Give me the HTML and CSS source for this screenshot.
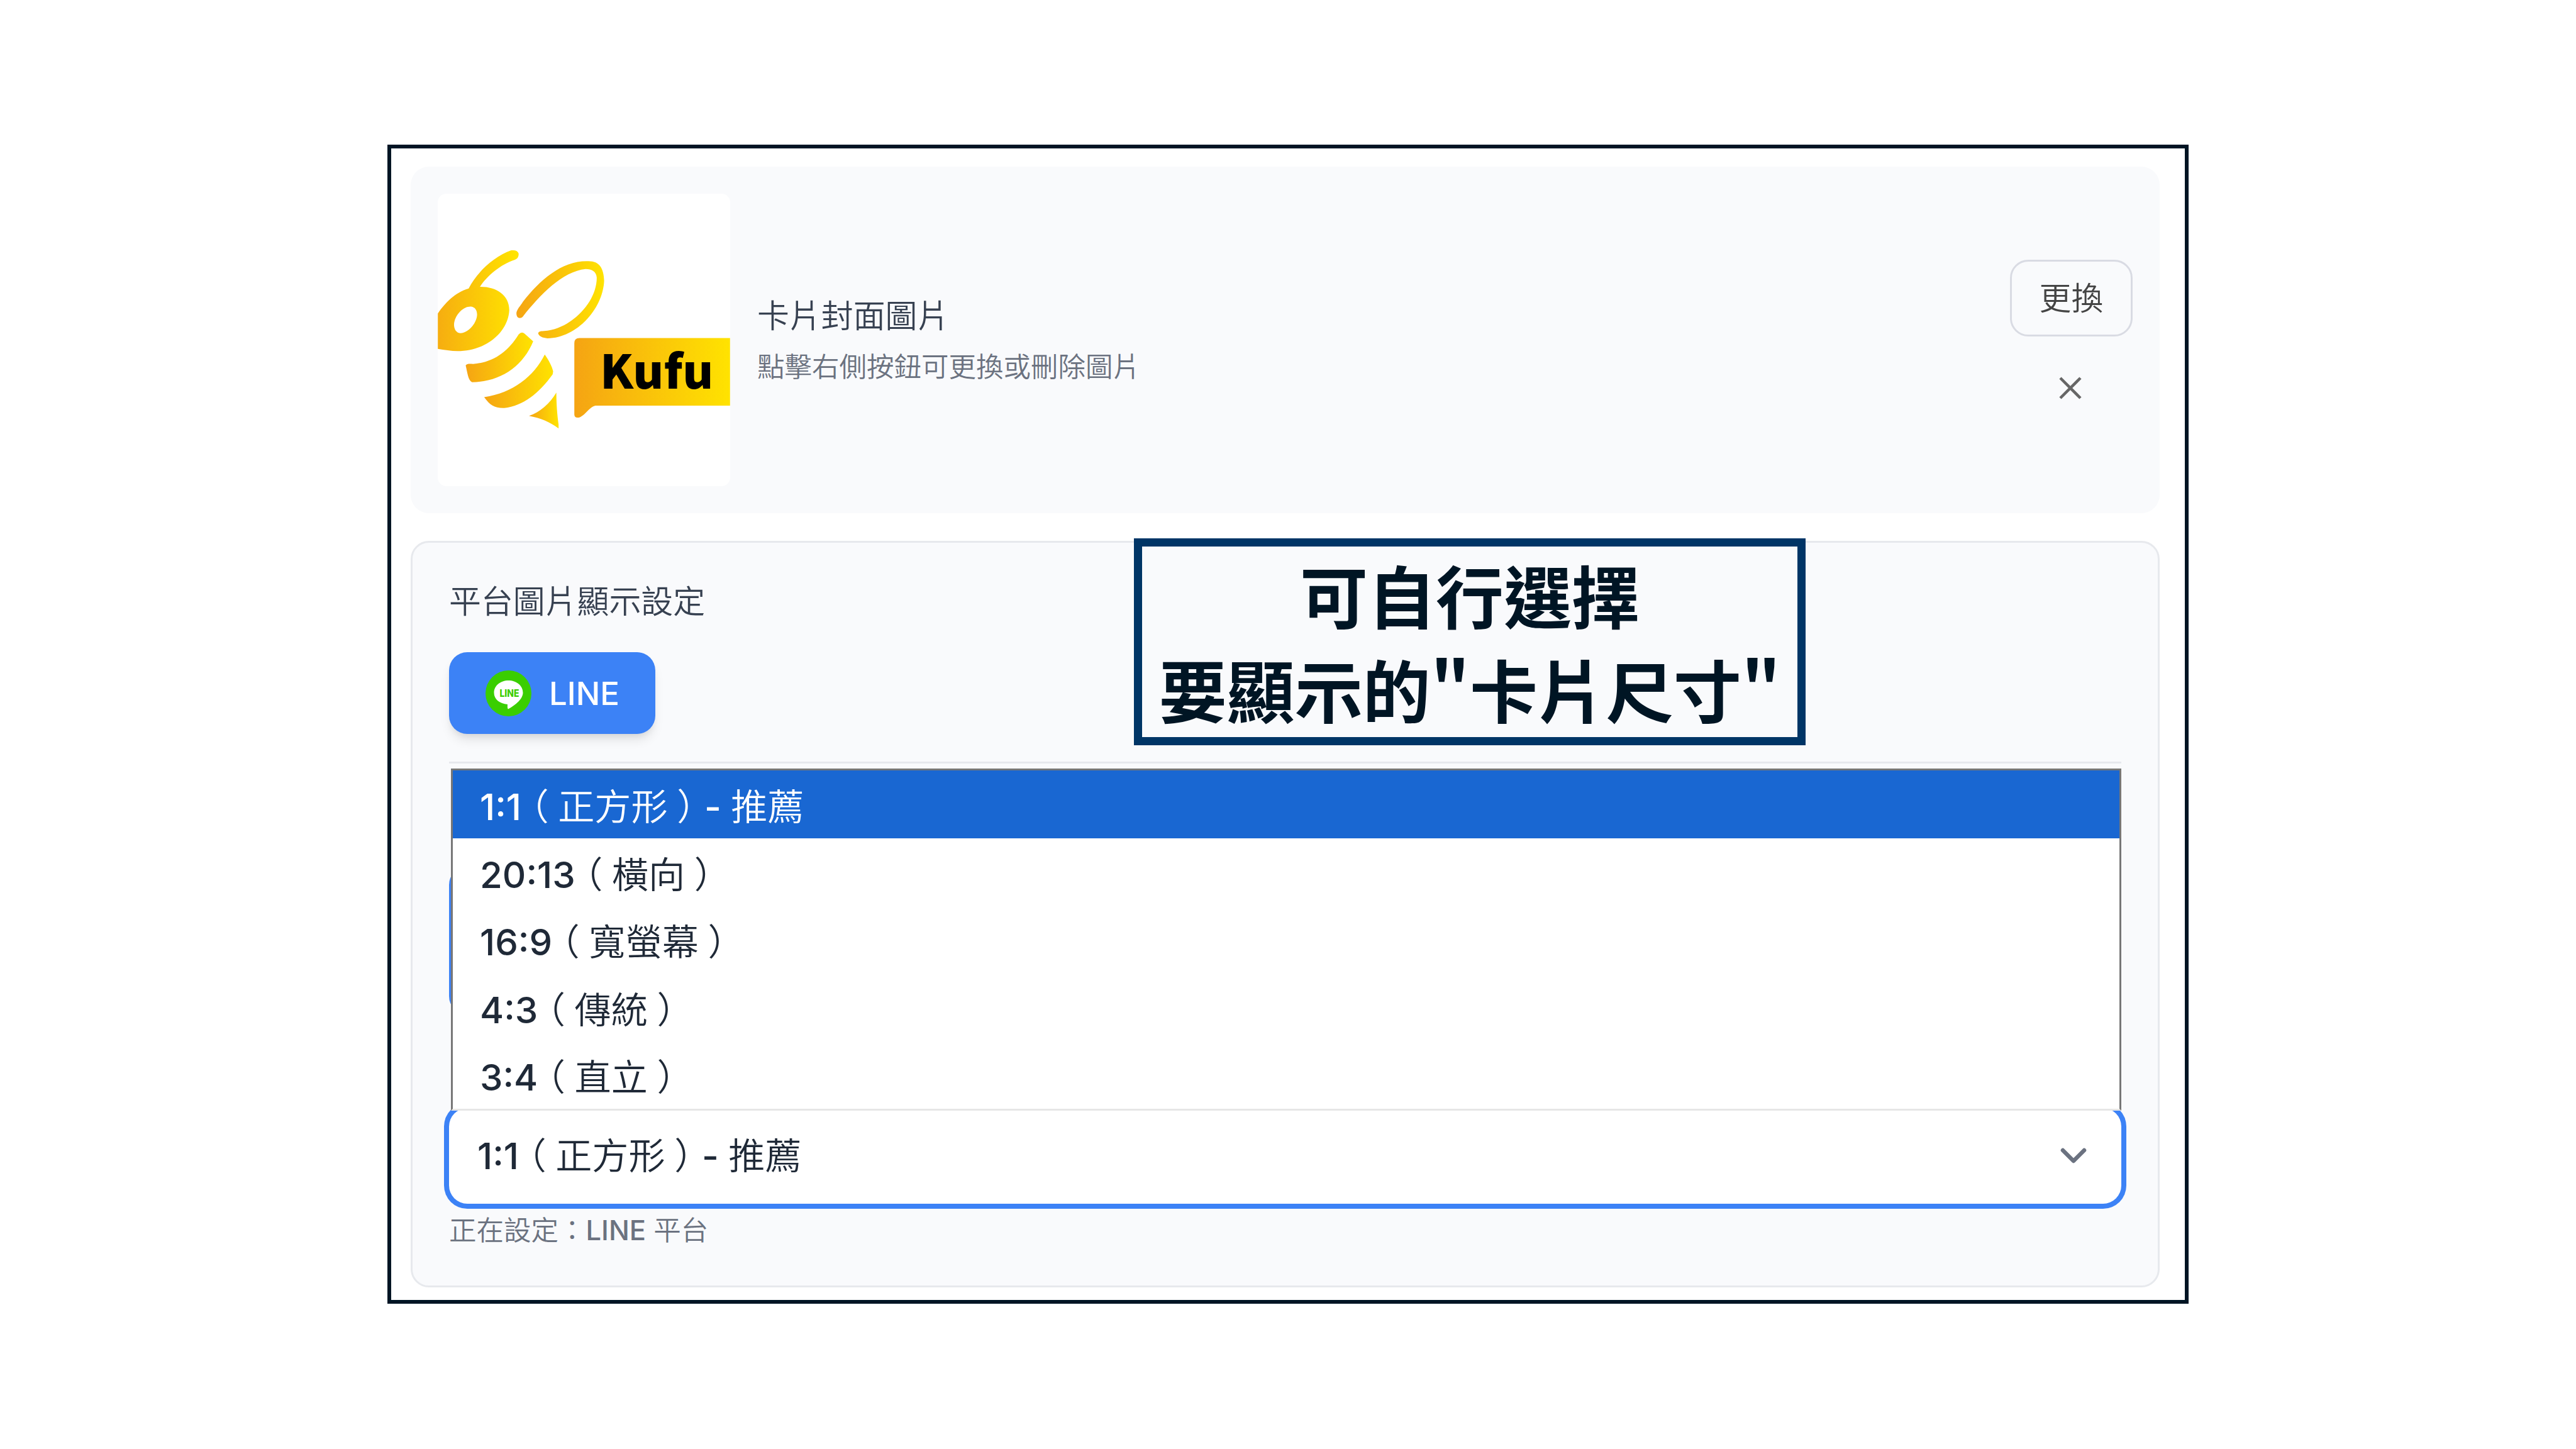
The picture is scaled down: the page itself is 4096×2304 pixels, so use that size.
FILE: index.html
```html
<!DOCTYPE html>
<html lang="zh-Hant">
<head>
    <meta charset="UTF-8">
    <meta name="viewport" content="width=device-width, initial-scale=1.0">
    <title>卡片封面圖片</title>
    <link rel="stylesheet" href="styles.css">
</head>
<body>
    <div class="frame">
        <section class="cover-card">
            <div class="cover-image">
                <svg viewBox="245 229 1186 1187">
                    <defs>
                        <linearGradient id="honey">
                            <stop offset="0" stop-color="#f5a413"/>
                            <stop offset="1" stop-color="#ffe300"/>
                        </linearGradient>
                        <linearGradient id="honey-head" gradientUnits="userSpaceOnUse" x1="190" y1="0" x2="560" y2="0">
                            <stop offset="0" stop-color="#f5a413"/>
                            <stop offset="1" stop-color="#ffe300"/>
                        </linearGradient>
                    </defs>
                    <!-- head, antenna and eye -->
                    <path fill="url(#honey-head)" fill-rule="evenodd" d="M245 715C275 672 315 630 370 614C402 550 470 485 543 459Q568 456 573 472Q574 491 558 497C500 515 442 565 416 607C482 606 535 640 535 702C530 792 440 868 325 868C300 868 270 863 245 859ZM380 687C405 690 410 720 398 745C385 775 360 792 338 795C315 795 306 768 313 745C322 715 350 685 380 687Z"/>
                    <!-- wing -->
                    <path fill="url(#honey)" d="M564 712C568 695 580 685 590 668C660 580 745 503 850 503C900 500 918 530 920 582C915 700 805 815 690 816C670 815 656 808 652 796C656 784 670 788 690 785C790 770 890 670 890 570C888 545 870 535 845 535C750 545 660 640 590 728C580 738 563 736 564 712Z"/>
                    <!-- body stripes -->
                    <path fill="url(#honey)" d="M573 800Q585 787 597 797L632 828C590 930 500 992 384 994C368 988 365 955 358 926C363 918 375 920 388 920C470 914 530 870 573 800Z"/>
                    <path fill="url(#honey)" d="M679 882C697 908 708 930 713 950L711 962C655 1040 590 1090 515 1099C475 1100 457 1088 433 1055C550 1038 635 970 679 882Z"/>
                    <path fill="url(#honey)" d="M726 1036C726 1085 730 1130 735 1165V1182C700 1155 660 1140 615 1131C660 1115 700 1080 726 1036Z"/>
                    <!-- speech tag -->
                    <path fill="url(#honey)" d="M820 815H1431V1089H885C860 1092 838 1138 812 1138Q799 1138 799 1125V835Q799 815 820 815Z"/>
                    <text class="logo-text" x="903" y="1021" textLength="461" lengthAdjust="spacingAndGlyphs">Kufu</text>
                </svg>
            </div>
            <div class="cover-info">
                <h3>卡片封面圖片</h3>
                <p>點擊右側按鈕可更換或刪除圖片</p>
            </div>
            <div class="cover-actions">
                <button class="change-btn">更換</button>
                <button class="remove-btn">
                    <svg viewBox="0 0 36 36"><path d="M2 2L34 34M34 2L2 34"/></svg>
                </button>
            </div>
        </section>

        <section class="platform-card">
            <h3>平台圖片顯示設定</h3>
            <button class="platform-btn">
                <svg class="line-icon" viewBox="0 0 73 73">
                    <circle cx="36.5" cy="36.5" r="36.5" fill="#3ace01"/>
                    <path fill="#fff" d="M36.5 16C49 16 59.5 24 59.5 35.5C59.5 45 48 55 36 61.5Q34.5 61 35 54C22 53 13.5 45.5 13.5 35.5C13.5 24 24 16 36.5 16Z"/>
                    <text x="22.5" y="41.5" textLength="31" lengthAdjust="spacingAndGlyphs">LINE</text>
                </svg>
                <span>LINE</span>
            </button>
            <div class="settings">
                <div class="ratio-preview"></div>
                <div class="select">
                    <span class="value"><b>1:1</b><i>（</i>正方形<i>）</i><b>- </b>推薦</span>
                    <svg class="chevron" viewBox="0 0 42 26"><path d="M4 4L21 21L38 4"/></svg>
                </div>
                <ul class="dropdown">
                    <li class="selected"><b>1:1</b><i>（</i>正方形<i>）</i><b>- </b>推薦</li>
                    <li><b>20:13</b><i>（</i>橫向<i>）</i></li>
                    <li><b>16:9</b><i>（</i>寬螢幕<i>）</i></li>
                    <li><b>4:3</b><i>（</i>傳統<i>）</i></li>
                    <li><b>3:4</b><i>（</i>直立<i>）</i></li>
                </ul>
            </div>
            <p class="hint">正在設定：<b>LINE</b> 平台</p>
            <div class="note">可自行選擇<br>要顯示的"卡片尺寸"</div>
        </section>
    </div>
</body>
</html>
```
FILE: styles.css
```css
* {
    box-sizing: border-box;
}

body {
    margin: 0;
    height: 2304px;
    padding: 230px 616px 231px;
    background: #fff;
    font-family: Inter, "Noto Sans CJK TC", sans-serif;
    font-weight: 350;
    overflow: hidden;
}

h3,
p,
ul {
    margin: 0;
    padding: 0;
    font-weight: 350;
}

button {
    font-family: inherit;
    font-weight: 350;
    padding: 0;
    border: none;
    background: none;
}

b {
    font-weight: 450;
}

/* full-width brackets, centred in their cell */
i {
    display: inline-block;
    width: 1em;
    text-align: center;
    font-style: normal;
    font-feature-settings: "halt";
}

.frame {
    height: 1843px;
    padding: 29px 40px 20px 31px;
    border: 6px solid #001524;
    display: flex;
    flex-direction: column;
    gap: 44px;
}

.cover-card {
    height: 551px;
    padding: 43px;
    display: flex;
    align-items: center;
    background: #f9fafc;
    border-radius: 29px;
}

.cover-image {
    width: 465px;
    height: 465px;
    background: #fff;
    border-radius: 14px;
    overflow: hidden;
}

.cover-image svg {
    display: block;
    width: 100%;
    height: 100%;
}

.logo-text {
    font-family: "Noto Sans CJK TC", sans-serif;
    font-size: 188px;
    font-weight: 900;
}

.cover-info {
    flex: 1;
    margin-left: 43px;
    padding-top: 4px;
}

.cover-info h3,
.platform-card h3 {
    font-size: 50.9px;
    line-height: 73px;
    color: #374151;
}

.cover-info p {
    margin-top: 8px;
    font-size: 43.5px;
    line-height: 72px;
    color: #6b7280;
}

.cover-actions {
    display: flex;
    flex-direction: column;
    align-items: center;
    gap: 43px;
    padding-bottom: 12px;
}

.change-btn {
    width: 195px;
    height: 122px;
    padding-bottom: 6px;
    border: 3px solid #d9dbe3;
    border-radius: 29px;
    font-size: 50.9px;
    color: #444;
}

.remove-btn {
    width: 78px;
    height: 78px;
    margin-right: 3px;
    display: flex;
    align-items: center;
    justify-content: center;
}

.remove-btn svg {
    width: 36px;
    height: 36px;
    fill: none;
    stroke: #666;
    stroke-width: 4.5;
}

.platform-card {
    position: relative;
    height: 1187px;
    padding: 57px 58px 58px;
    background: #f9fafc;
    border: 3px solid #e7e9ed;
    border-radius: 29px;
}

.platform-btn {
    display: flex;
    align-items: center;
    gap: 28px;
    width: 328px;
    height: 130px;
    margin-top: 44px;
    padding-left: 58px;
    background: #3c82f6;
    border-radius: 29px;
    box-shadow: 0 12px 17px -3px rgba(0, 0, 0, 0.1), 0 6px 12px -6px rgba(0, 0, 0, 0.1);
    font-size: 51px;
    font-weight: 550;
    color: #fff;
}

.line-icon {
    width: 73px;
    height: 73px;
}

.line-icon text {
    font-size: 16.5px;
    font-weight: 800;
    fill: #3ace01;
}

.settings {
    position: relative;
    margin-top: 44px;
    padding-top: 164px;
    border-top: 3px solid #e7e9ed;
}

.ratio-preview {
    width: 235px;
    height: 235px;
    border: 6px solid #3c82f6;
    border-radius: 29px;
    background: #fff;
}

.select {
    display: flex;
    align-items: center;
    justify-content: space-between;
    height: 152px;
    margin-top: 149px;
    padding: 0 55px 0 45px;
    background: #fff;
    border-radius: 29px;
    box-shadow: 0 0 0 8px #3c82f6;
    font-size: 58.2px;
    color: #1f2937;
}

.value {
    padding-bottom: 9px;
}

.chevron {
    width: 42px;
    height: 26px;
    fill: none;
    stroke: #6b7280;
    stroke-width: 6.5;
    stroke-linecap: round;
    stroke-linejoin: round;
}

.dropdown {
    position: absolute;
    top: 8px;
    left: 3px;
    right: 0;
    height: 544px;
    list-style: none;
    background: #fff;
    border: 3px solid #777;
    border-bottom-color: #e6e6e6;
}

.dropdown li {
    height: 107.5px;
    padding-left: 43px;
    font-size: 58.2px;
    line-height: 117px;
    color: #1f2937;
}

.dropdown .selected {
    background: #1967d2;
    color: #fff;
}

.hint {
    margin-top: 10px;
    font-size: 43.5px;
    line-height: 64px;
    color: #6b7280;
}

/* callout on top of the card */
.note {
    position: absolute;
    top: -7px;
    left: 1147px;
    width: 1068px;
    height: 329px;
    padding-top: 1px;
    border: 13px solid #003566;
    background: #f9fafc;
    font-family: "Noto Sans CJK TC", sans-serif;
    font-size: 108px;
    font-weight: 700;
    line-height: 149.5px;
    text-align: center;
    white-space: nowrap;
    color: #001524;
}
```
